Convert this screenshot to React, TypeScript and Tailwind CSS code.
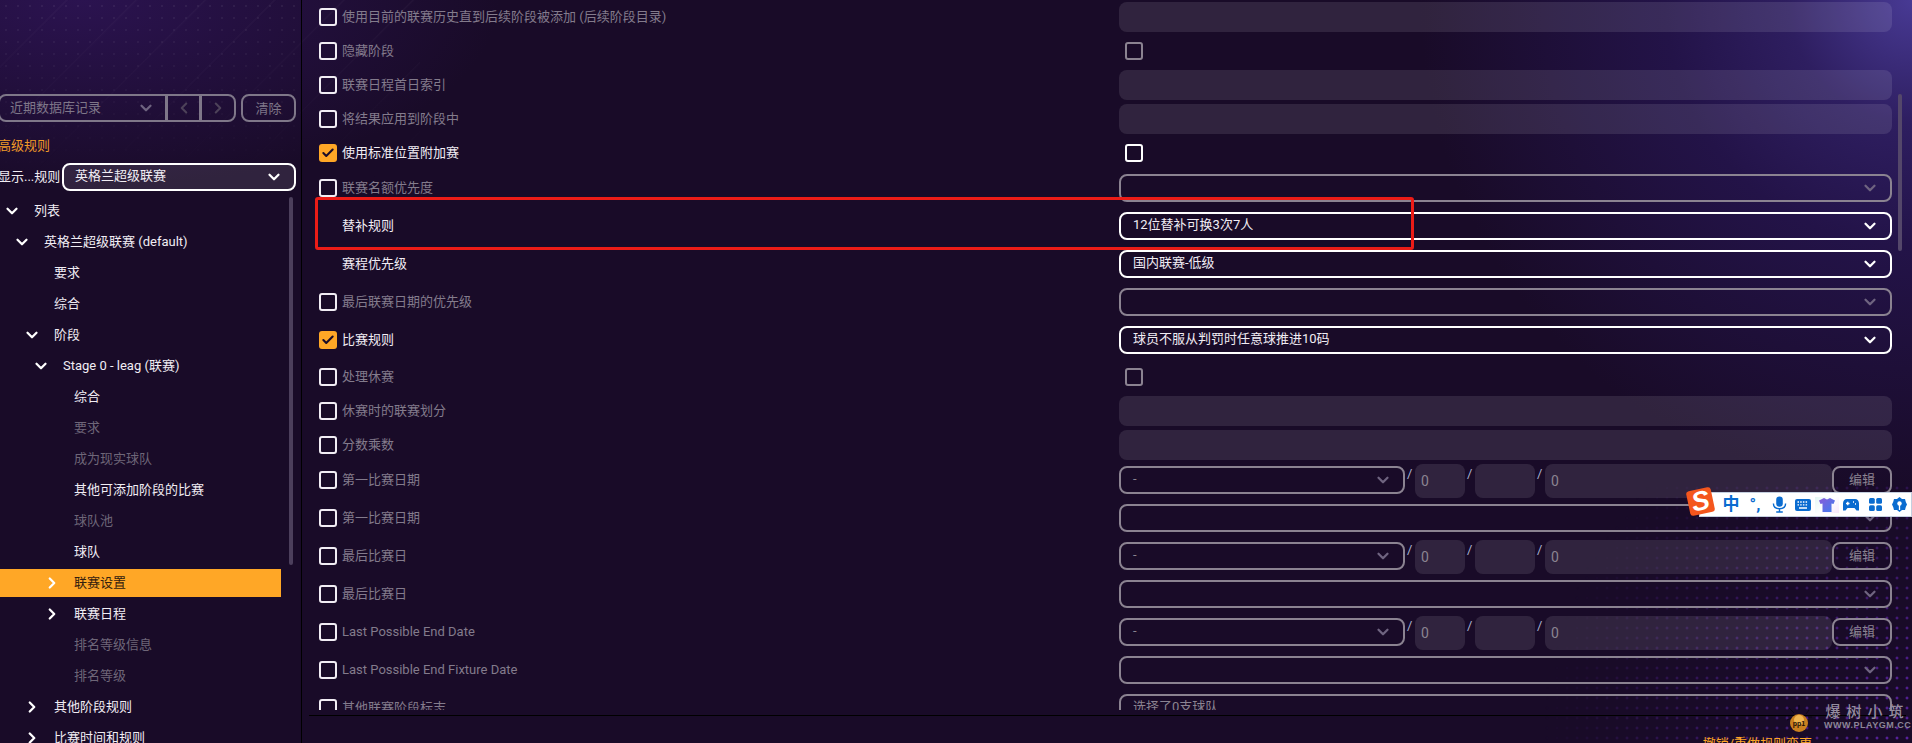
import { ChevronDown, ChevronRight, ChevronLeft, Check } from 'lucide-react';

const treeItems = [
  { label: '列表', level: 0, arrow: 'down' },
  { label: '英格兰超级联赛 (default)', level: 1, arrow: 'down' },
  { label: '要求', level: 2 },
  { label: '综合', level: 2 },
  { label: '阶段', level: 2, arrow: 'down' },
  { label: 'Stage 0 - leag (联赛)', level: 3, arrow: 'down' },
  { label: '综合', level: 4 },
  { label: '要求', level: 4, dim: true },
  { label: '成为现实球队', level: 4, dim: true },
  { label: '其他可添加阶段的比赛', level: 4 },
  { label: '球队池', level: 4, dim: true },
  { label: '球队', level: 4 },
  { label: '联赛设置', level: 4, arrow: 'right', active: true },
  { label: '联赛日程', level: 4, arrow: 'right' },
  { label: '排名等级信息', level: 4, dim: true },
  { label: '排名等级', level: 4, dim: true },
  { label: '其他阶段规则', level: 2, arrow: 'right' },
  { label: '比赛时间和规则', level: 2, arrow: 'right' },
];

const levelPadding = ['pl-[4px]', 'pl-[14px]', 'pl-[24px]', 'pl-[33px]', 'pl-[44px]'];

type Row = {
  label: string;
  kind: 'input' | 'toggle' | 'combo' | 'date';
  box?: 'off' | 'on';
  on?: boolean;
  value?: string;
  noArrow?: boolean;
};

const rows: Row[] = [
  { label: '使用目前的联赛历史直到后续阶段被添加 (后续阶段目录)', kind: 'input', box: 'off' },
  { label: '隐藏阶段', kind: 'toggle', box: 'off' },
  { label: '联赛日程首日索引', kind: 'input', box: 'off' },
  { label: '将结果应用到阶段中', kind: 'input', box: 'off' },
  { label: '使用标准位置附加赛', kind: 'toggle', box: 'on', on: true },
  { label: '联赛名额优先度', kind: 'combo', box: 'off' },
  { label: '替补规则', kind: 'combo', on: true, value: '12位替补可换3次7人' },
  { label: '赛程优先级', kind: 'combo', on: true, value: '国内联赛-低级' },
  { label: '最后联赛日期的优先级', kind: 'combo', box: 'off' },
  { label: '比赛规则', kind: 'combo', box: 'on', on: true, value: '球员不服从判罚时任意球推进10码' },
  { label: '处理休赛', kind: 'toggle', box: 'off' },
  { label: '休赛时的联赛划分', kind: 'input', box: 'off' },
  { label: '分数乘数', kind: 'input', box: 'off' },
  { label: '第一比赛日期', kind: 'date', box: 'off' },
  { label: '第一比赛日期', kind: 'combo', box: 'off' },
  { label: '最后比赛日', kind: 'date', box: 'off' },
  { label: '最后比赛日', kind: 'combo', box: 'off' },
  { label: 'Last Possible End Date', kind: 'date', box: 'off' },
  { label: 'Last Possible End Fixture Date', kind: 'combo', box: 'off' },
  { label: '其他联赛阶段标志', kind: 'combo', box: 'off', value: '选择了0支球队', noArrow: true },
];

function Arrow({ dir, dim }: { dir: string; dim?: boolean }) {
  const cls = `shrink-0 ${dim ? 'text-[#6f6480]' : 'text-white'}`;
  if (dir === 'right') return <ChevronRight size={18} strokeWidth={3} className={cls} />;
  return <ChevronDown size={18} strokeWidth={3} className={cls} />;
}

function Combo({ on, value, noArrow, className }: { on?: boolean; value?: string; noArrow?: boolean; className?: string }) {
  return (
    <div
      className={`flex h-[28px] items-center justify-between rounded-lg border-2 pl-[12px] pr-[11px] ${
        on ? 'border-white text-[#f1edf4]' : 'border-[#8b8391] text-[#8b8391]'
      } ${className ?? ''}`}
    >
      <span className="pb-[3px] leading-none">{value}</span>
      {!noArrow && <Arrow dir="down" dim={!on} />}
    </div>
  );
}

function Slash() {
  return <span className="w-[10px] pl-[2px] pt-[2px] text-[13px] leading-[16px] text-[#a9b4d0]">/</span>;
}

function NumberBox({ width, value }: { width: string; value?: string }) {
  return (
    <div className={`${width} flex h-[34px] items-center rounded-lg bg-white/10 pl-[6px] text-[14px] text-[#8b8391]`}>
      {value}
    </div>
  );
}

function DateField() {
  return (
    <div className="flex items-start">
      <Combo value="-" className="mt-[2px] w-[286px]" />
      <Slash />
      <NumberBox width="w-[50px]" value="0" />
      <Slash />
      <NumberBox width="w-[60px]" />
      <Slash />
      <NumberBox width="w-[287px]" value="0" />
      <button className="mt-[2px] h-[28px] w-[60px] rounded-lg border-2 border-[#8b8391] pb-[2px] text-[13px] leading-none text-[#8b8391]">
        编辑
      </button>
    </div>
  );
}

function RowField({ row }: { row: Row }) {
  if (row.kind === 'input') return <div className="h-[30px] rounded-lg bg-white/10" />;
  if (row.kind === 'toggle')
    return (
      <div className="flex h-[30px] items-center pl-[6px]">
        <div className={`size-[18px] rounded-[3px] border-2 ${row.on ? 'border-white' : 'border-[#8b8391]'}`} />
      </div>
    );
  if (row.kind === 'date') return <DateField />;
  return <Combo on={row.on} value={row.value} noArrow={row.noArrow} className="mt-[2px]" />;
}

function SettingRow({ row }: { row: Row }) {
  const tall = row.kind === 'combo' || row.kind === 'date';
  return (
    <div className={`flex shrink-0 items-start ${tall ? 'h-[34px]' : 'h-[30px]'}`}>
      <div className={`flex w-[817px] items-center pl-[17px] ${tall ? 'h-[32px]' : 'h-[30px]'}`}>
        {row.box === 'on' && (
          <div className="flex size-[18px] items-center justify-center rounded-[3px] bg-[#ffa726]">
            <Check size={14} strokeWidth={3.5} className="text-[#1a0c28]" />
          </div>
        )}
        {row.box === 'off' && <div className="size-[18px] rounded-[3px] border-2 border-[#f1edf4]" />}
        {!row.box && <div className="w-[18px]" />}
        <span className={`ml-[5px] ${row.on ? 'text-[#f1edf4]' : 'text-[#837b8c]'}`}>{row.label}</span>
      </div>
      <div className="w-[773px]">
        <RowField row={row} />
      </div>
    </div>
  );
}

function Sidebar() {
  return (
    <aside className="flex h-full w-[302px] shrink-0 flex-col overflow-hidden border-r border-black pt-[94px]">
      <div className="flex h-[28px] items-stretch pl-0 pr-[5px] text-[#7f7789]">
        <div className="-ml-[2px] flex w-[238px] items-stretch rounded-lg border-2 border-[#7f7789]">
          <div className="flex w-[168px] items-center justify-between border-r-[3px] border-[#7f7789] pl-[10px] pr-[10px]">
            <span>近期数据库记录</span>
            <Arrow dir="down" dim />
          </div>
          <div className="flex w-[34px] items-center justify-center border-r-[3px] border-[#7f7789]">
            <ChevronLeft size={18} strokeWidth={2.8} className="text-[#4d4259]" />
          </div>
          <div className="flex flex-1 items-center justify-center">
            <ChevronRight size={18} strokeWidth={2.8} className="text-[#4d4259]" />
          </div>
        </div>
        <button className="ml-[5px] w-[55px] rounded-lg border-2 border-[#7f7789] leading-none">清除</button>
      </div>
      <div className="-ml-[2px] mt-[14px] h-[20px] leading-[20px] text-[#f09a28]">高级规则</div>
      <div className="mt-[7px] flex h-[28px] items-center pr-[5px]">
        <span className="-ml-[2px] w-[64px] shrink-0 text-[#f1edf4]">显示...规则</span>
        <div className="flex h-[28px] flex-1 items-center justify-between rounded-lg border-2 border-white bg-white/10 pl-[11px] pr-[11px] text-[#f1edf4]">
          <span className="pb-[3px] leading-none">英格兰超级联赛</span>
          <Arrow dir="down" />
        </div>
      </div>
      <div className="mt-[6px] flex min-h-0 flex-1">
        <div className="flex w-[281px] shrink-0 flex-col gap-[3px]">
          {treeItems.map((item, i) => (
            <div
              key={i}
              className={`flex h-[28px] shrink-0 items-center ${levelPadding[item.level]} ${
                item.active
                  ? 'bg-[#ffa726] text-[#33200f]'
                  : item.dim
                    ? 'text-[#6e6678]'
                    : 'text-[#f1edf4]'
              }`}
            >
              <span className="mr-[15px] flex w-[15px] shrink-0 justify-center">
                {item.arrow && <Arrow dir={item.arrow} />}
              </span>
              <span className="whitespace-nowrap">{item.label}</span>
            </div>
          ))}
        </div>
        <div className="ml-[8px] h-[368px] w-[4px] rounded-full bg-[#4c3f5c]" />
      </div>
    </aside>
  );
}

function Main() {
  return (
    <main className="flex h-full min-w-0 flex-1 flex-col">
      <div className="flex h-[710px] shrink-0 overflow-hidden">
        <div className="flex w-[1590px] shrink-0 flex-col gap-[4px] pt-[2px]">
          {rows.map((row, i) => (
            <SettingRow key={i} row={row} />
          ))}
        </div>
        <div className="ml-[6px] mt-[94px] h-[157px] w-[4px] rounded-full bg-[#54476a]" />
      </div>
      <div className="ml-[7px] mr-[6px] mt-[5px] border-t border-black" />
      <div className="flex justify-end pr-[100px] pt-[20px]">
        <span className="whitespace-nowrap leading-[16px] text-[#ffa726]">撤销/重做规则变更</span>
      </div>
    </main>
  );
}

function ImeBar() {
  const blue = 'text-[#0a6cd0]';
  return (
    <div className="absolute left-[1687px] top-[488px] h-[30px] w-[225px]">
      <div className="absolute bottom-[1px] left-[12px] right-0 top-[4px] flex items-center border border-[#c4cfdf] bg-white pl-[19px]">
        <span className={`flex w-[24px] justify-center text-[17px] font-bold ${blue}`}>中</span>
        <span className={`flex w-[24px] justify-center text-[17px] font-bold leading-none ${blue}`}>°,</span>
        <span className="flex w-[24px] justify-center">
          <svg width="15" height="19" viewBox="0 0 16 18" fill="none">
            <rect x="4.500" y="0.500" width="7" height="11" rx="3.500" fill="#0a6cd0" />
            <path d="M1.500 8c0 3.500 2.500 5.500 6.500 5.500s6.500-2 6.500-5.500M8 13.500V17M4.500 17h7" stroke="#0a6cd0" strokeWidth="1.500" />
          </svg>
        </span>
        <span className="flex w-[24px] justify-center">
          <svg width="16" height="12" viewBox="0 0 16 12">
            <rect width="16" height="12" rx="2" fill="#0a6cd0" />
            <path d="M2.500 3h1.500M5.200 3h1.500M7.900 3h1.500M10.600 3h1.500M2.500 5.800h1.500M5.200 5.800h1.500M7.900 5.800h1.500M10.600 5.800h1.500M4 9h8" stroke="#fff" strokeWidth="1.300" />
          </svg>
        </span>
        <span className="flex w-[24px] justify-center bg-[linear-gradient(135deg,#e4f7f4,#ffffff_50%,#f8e8fb)]">
          <svg width="16" height="16" viewBox="0 0 16 15">
            <defs>
              <linearGradient id="shirt" x1="0" y1="0" x2="1" y2="1">
                <stop offset="0" stopColor="#8a5bd8" />
                <stop offset="1" stopColor="#3d7df0" />
              </linearGradient>
            </defs>
            <path d="M5 0.500 8 2l3-1.500L16 3l-1.500 3.500L12.500 6v8.500h-9V6L1.500 6.500 0 3z" fill="url(#shirt)" />
          </svg>
        </span>
        <span className="flex w-[24px] justify-center">
          <svg width="16" height="14" viewBox="0 0 16 13">
            <path d="M4 0.500h8c2.500 0 4 2 4 4.500v7h-2.500l-2-2.500h-7l-2 2.500H0V5C0 2.500 1.500.500 4 .500z" fill="#0a6cd0" />
            <path d="M3 5h3.500M4.750 3.250v3.500M10 3.500h1M12 5.500h1" stroke="#fff" strokeWidth="1.300" />
          </svg>
        </span>
        <span className="flex w-[24px] justify-center">
          <svg width="13" height="13" viewBox="0 0 13 13" fill="#0a6cd0">
            <rect width="5.800" height="5.800" rx="1.500" />
            <rect x="7.200" width="5.800" height="5.800" rx="1.500" />
            <rect y="7.200" width="5.800" height="5.800" rx="1.500" />
            <rect x="7.200" y="7.200" width="5.800" height="5.800" rx="1.500" />
          </svg>
        </span>
        <span className="flex w-[24px] justify-center">
          <svg width="15" height="15" viewBox="0 0 15 15">
            <path d="M7.500 0 10 2h3l.8 3L15 7.500 13.800 10 13 13h-3l-2.500 2L5 13H2l-.8-3L0 7.500 1.200 5 2 2h3z" fill="#0a6cd0" />
            <circle cx="7.500" cy="6.500" r="2.200" fill="#fff" />
            <path d="M7.500 8v5" stroke="#fff" strokeWidth="1.300" />
          </svg>
        </span>
      </div>
      <div className="absolute left-[1px] top-[1px] flex h-[25px] w-[25px] -rotate-12 items-center justify-center rounded-[3px] bg-[#f4561d] text-[27px] font-black italic leading-none text-white [font-family:'Liberation_Sans',sans-serif]">
        S
      </div>
    </div>
  );
}

function Watermark() {
  return (
    <div className="pointer-events-none absolute left-[1786px] top-[702px] flex items-start">
      <svg width="26" height="30" viewBox="0 0 26 30" className="mt-[2px]">
        <path d="M3 4l5 5M1 16l5-2M13 1v5M23 6l-3 4M26 13h-4" stroke="#0d0714" strokeWidth="1" />
        <circle cx="13" cy="19" r="9" fill="#c9801f" />
        <circle cx="13" cy="16" r="5" fill="#f0b650" />
        <text x="13" y="22" textAnchor="middle" fontSize="7" fontWeight="700" fill="#241207" fontFamily="Liberation Sans, sans-serif">
          pp1
        </text>
      </svg>
      <div className="ml-[12px] flex flex-col items-center">
        <span className="text-[15px] font-medium leading-[18px] tracking-[6px] text-[#948c9f] [font-family:'Noto_Sans_CJK_SC',serif]">
          爆树小筑
        </span>
        <span className="text-[9px] font-bold leading-[10px] tracking-[0.5px] text-[#8d8698] [font-family:'Liberation_Sans',sans-serif]">
          WWW.PLAYGM.CC
        </span>
      </div>
    </div>
  );
}

export default function App() {
  return (
    <div className="relative flex h-screen w-screen overflow-hidden bg-[#190b28] text-[13px] [font-family:Roboto,'Noto_Sans_CJK_SC',sans-serif]">
      <div className="pointer-events-none absolute inset-0 bg-[radial-gradient(circle_at_100%_0%,#483a94_0%,#2e1e60_6%,#231348_12%,transparent_24%),radial-gradient(ellipse_420px_190px_at_80px_0px,#2b1350_0%,transparent_100%)]" />
      <div className="pointer-events-none absolute left-0 top-0 h-[200px] w-[420px] bg-[repeating-linear-gradient(135deg,transparent_0px,transparent_46px,#ffffff08_47px,transparent_49px)] [mask-image:linear-gradient(to_bottom,black,transparent)]" />
      <div className="pointer-events-none absolute left-0 top-0 h-[180px] w-[300px] bg-[radial-gradient(#ffffff10_1px,transparent_1.300px)] bg-[size:12px_12px] [mask-image:linear-gradient(to_bottom,black,transparent)]" />
      <div className="pointer-events-none absolute bottom-0 right-0 h-[260px] w-[420px] bg-[radial-gradient(#5a22a0_1.300px,transparent_1.700px)] bg-[size:10px_10px] [mask-image:radial-gradient(circle_at_100%_100%,black,transparent_75%)]" />
      <div className="relative flex h-full w-full">
        <Sidebar />
        <Main />
      </div>
      <div className="pointer-events-none absolute left-[315px] top-[197px] h-[53px] w-[1099px] rounded-[3px] border-[3px] border-[#ec1c17]" />
      <ImeBar />
      <Watermark />
    </div>
  );
}
